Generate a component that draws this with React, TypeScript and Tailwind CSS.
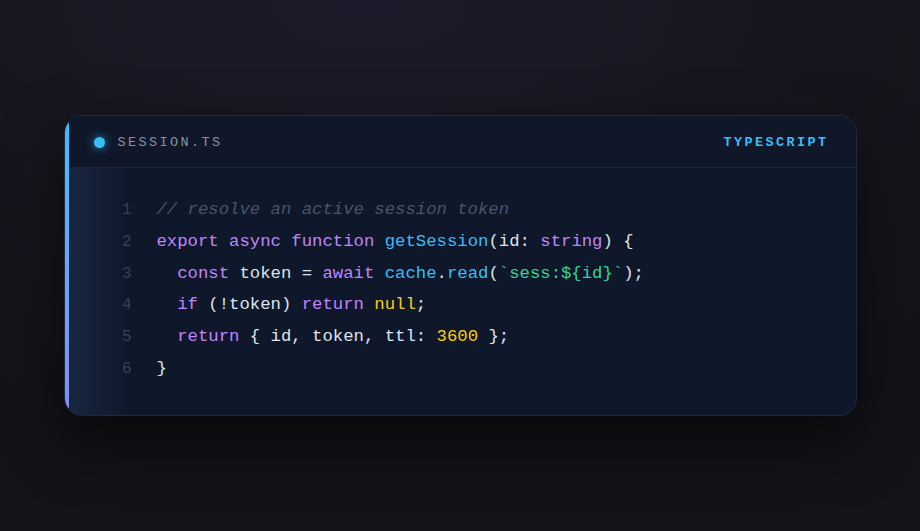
import React from "react";

const mono = { fontFamily: '"Liberation Mono", "DejaVu Sans Mono", monospace' };

type Tok = [string, string];

const K = "text-[#c084fc]"; // keyword purple
const F = "text-[#38bdf8]"; // function blue
const P = "text-[#dfe4ec]"; // plain
const S = "text-[#34d399]"; // string green
const N = "text-[#facc15]"; // number yellow
const C = "text-[#475569] italic"; // comment

const lines: Tok[][] = [
  [[C, "// resolve an active session token"]],
  [
    [K, "export"], [P, " "], [K, "async"], [P, " "], [K, "function"], [P, " "],
    [F, "getSession"], [P, "(id: "], [K, "string"], [P, ") {"],
  ],
  [
    [P, "  "], [K, "const"], [P, " token = "], [K, "await"], [P, " "], [F, "cache"], [P, "."],
    [F, "read"], [P, "("], [S, "`sess:${id}`"], [P, ");"],
  ],
  [[P, "  "], [K, "if"], [P, " (!token) "], [K, "return"], [P, " "], [N, "null"], [P, ";"]],
  [[P, "  "], [K, "return"], [P, " { id, token, ttl: "], [N, "3600"], [P, " };"]],
  [[P, "}"]],
];

export default function App() {
  return (
    <div className="w-[920px] h-[531px] flex items-center justify-center bg-[radial-gradient(ellipse_90%_80%_at_40%_0%,#1d1b2b_0%,#17161f_50%,#131318_100%)]">
      <div className="relative w-[793px] h-[301px] rounded-[18px] border border-[#1e2940] bg-[#0f172a] overflow-hidden shadow-[0_24px_60px_rgba(0,0,0,0.55)] flex flex-col">
        <div className="absolute left-0 top-0 bottom-0 w-[4px] bg-gradient-to-b from-[#38bdf8] to-[#818cf8]" />
        <div className="absolute left-[4px] top-[52px] bottom-0 w-[60px] bg-gradient-to-r from-[#1a2a44] to-transparent opacity-80" />
        <div className="h-[52px] flex items-center justify-between pl-[29px] pr-[27px] pt-[1px] bg-[#0f1729] border-b border-[#1b253a]">
          <div className="flex items-center gap-[13px]">
            <div className="w-[11px] h-[11px] rounded-full bg-[#38bdf8] shadow-[0_0_10px_rgba(56,189,248,0.7)]" />
            <span style={mono} className="pt-[3px] text-[13.5px] tracking-[2.4px] text-[#8893a4]">SESSION.TS</span>
          </div>
          <span style={mono} className="pt-[3px] text-[13.5px] tracking-[2.4px] font-bold text-[#38bdf8]">TYPESCRIPT</span>
        </div>
        <div className="relative flex-1 pt-[26px]" style={mono}>
          {lines.map((toks, i) => (
            <div key={i} className="flex h-[31.8px] items-center text-[17.3px] leading-[32px]">
              <span className="w-[67px] text-right text-[16px] text-[#334155]">{i + 1}</span>
              <span className="ml-[25px] whitespace-pre">
                {toks.map((t, j) => (
                  <span key={j} className={t[0]}>{t[1]}</span>
                ))}
              </span>
            </div>
          ))}
        </div>
      </div>
    </div>
  );
}
